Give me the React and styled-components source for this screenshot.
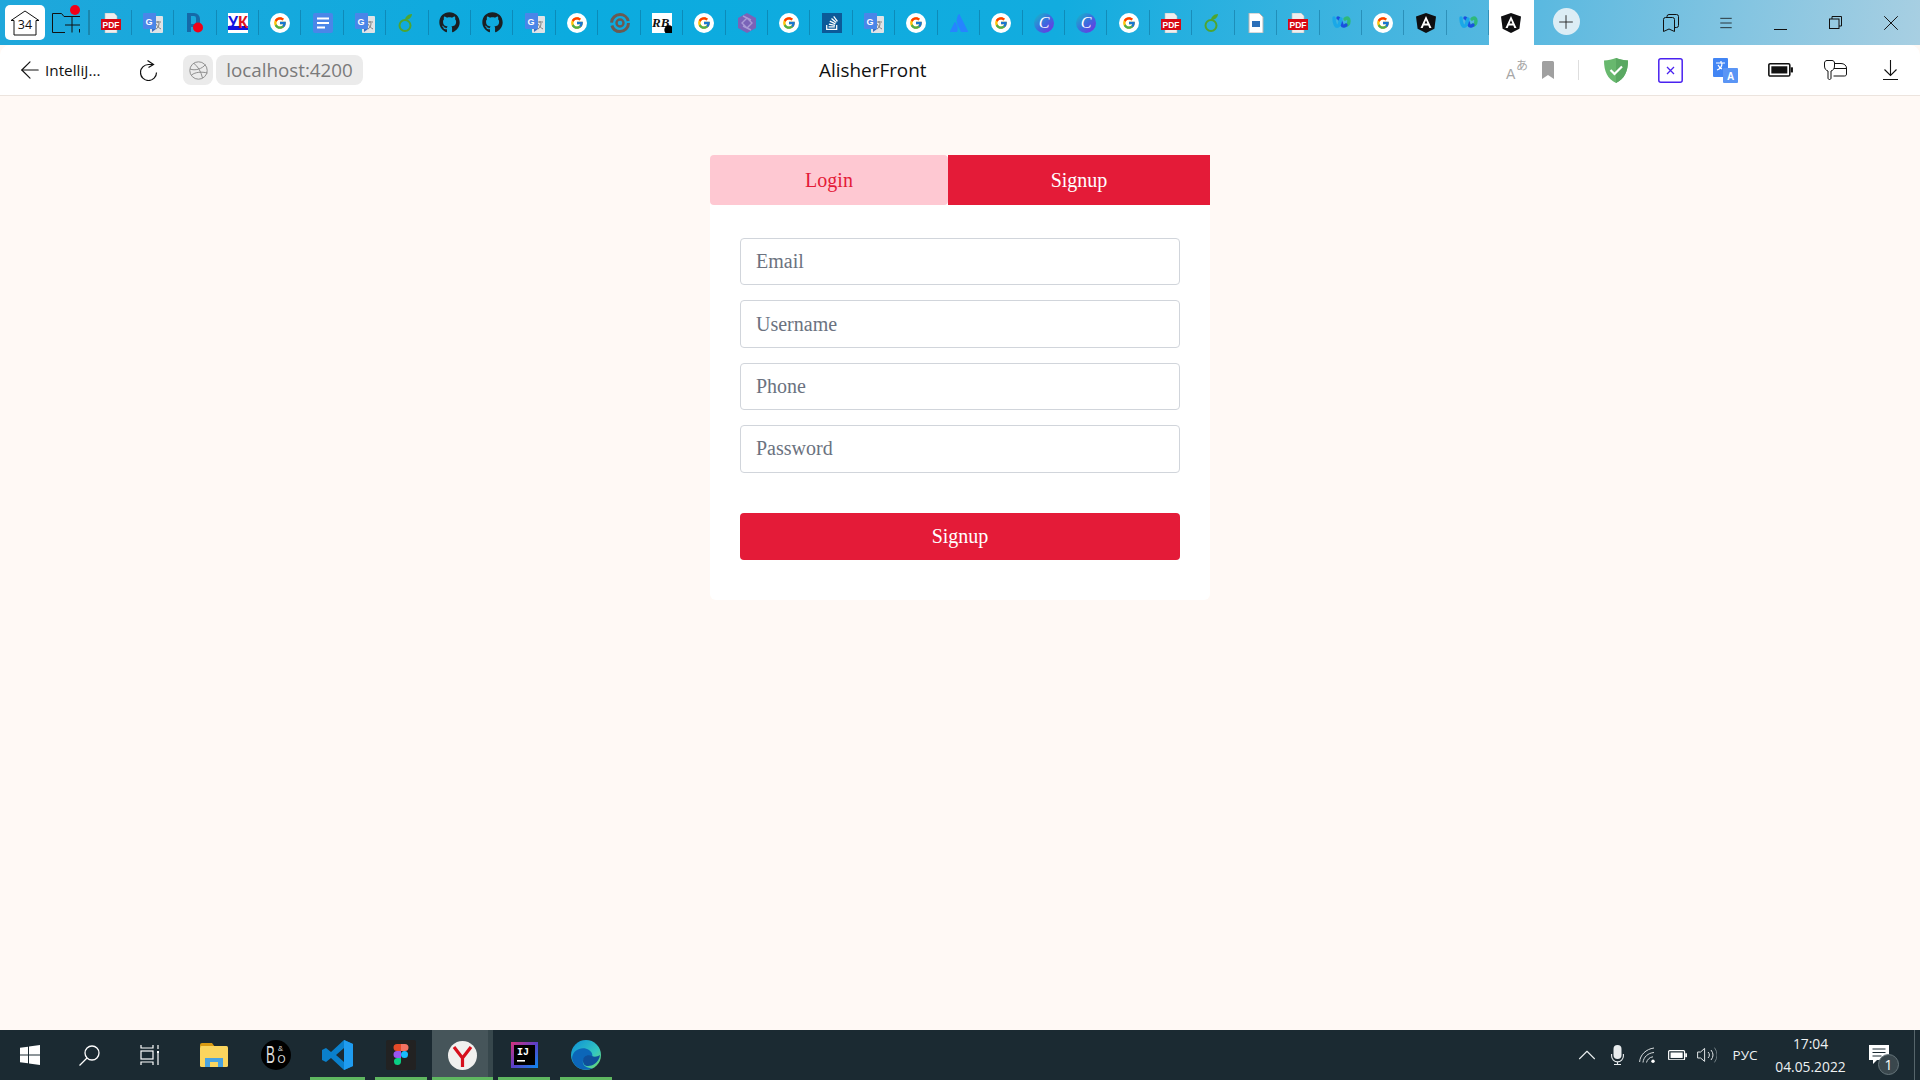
import React from 'react';
import styled, { createGlobalStyle } from 'styled-components';
import { ArrowLeft, X, Menu, Plus, ChevronUp } from 'lucide-react';
import { FcGoogle } from 'react-icons/fc';
import { FaGithub, FaStackOverflow } from 'react-icons/fa';
import { SiAtlassian } from 'react-icons/si';

const GlobalStyle = createGlobalStyle`
  html, body {
    margin: 0;
    height: 100%;
    overflow: hidden;
  }
  * { box-sizing: border-box; }
`;

const Screen = styled.div`
  width: 1920px;
  height: 1080px;
  display: flex;
  flex-direction: column;
  background: #fff9f5;
`;

const TabBar = styled.div`
  height: 45px;
  display: flex;
  align-items: stretch;
  background: linear-gradient(100deg, #1fa7db 0%, #0babdf 30%, #12acdf 55%, #5bb9e0 80%, #a8cfe2 100%);
`;

const HomeButton = styled.div`
  width: 40px;
  height: 35px;
  margin: 5px 0 0 5px;
  background: #fff;
  border-radius: 5px;
  display: flex;
  align-items: center;
  justify-content: center;
`;

const FolderButton = styled.div`
  position: relative;
  width: 41px;
  margin-right: 2px;
  display: flex;
  align-items: center;
  justify-content: center;
  svg { margin-top: 1px; }
`;

const RedDot = styled.span`
  position: absolute;
  top: 5px;
  right: 6px;
  width: 10px;
  height: 10px;
  border-radius: 50%;
  background: #f00018;
`;

const TabList = styled.div`
  display: flex;
  border-left: 2px solid #1a86ad;
  margin: 10px 0 10px 0;
`;

const Tab = styled.div`
  flex: 0 0 ${(p) => (p.$first ? '41.7px' : '42.43px')};
  margin: -10px 0;
  display: flex;
  align-items: center;
  justify-content: center;
  position: relative;
  &::after {
    content: '';
    position: absolute;
    right: 0;
    top: 10px;
    bottom: 10px;
    width: 1px;
    background: rgba(10, 100, 140, 0.45);
  }
`;

const ActiveTab = styled.div`
  width: 44.5px;
  background: #fff;
  display: flex;
  align-items: center;
  justify-content: center;
`;

const NewTab = styled.div`
  width: 27px;
  height: 27px;
  margin: 8px 0 0 19px;
  border-radius: 50%;
  background: #dcedf5;
  display: flex;
  align-items: center;
  justify-content: center;
  color: #222;
`;

const WindowControls = styled.div`
  margin-left: auto;
  display: flex;
  align-items: center;
  padding-right: 2px;
`;

const WindowButton = styled.div`
  width: 55px;
  height: 45px;
  display: flex;
  align-items: center;
  justify-content: center;
  color: #111;
`;

const Toolbar = styled.div`
  height: 51px;
  display: flex;
  align-items: center;
  background: #fff;
  border-radius: 10px 10px 0 0;
  border-bottom: 1px solid #ece4de;
  padding: 0 2px 0 16px;
  font-family: 'Open Sans', 'Noto Sans', sans-serif;
`;

const BackLabel = styled.span`
  margin-left: 1px;
  width: 95px;
  font-size: 15.3px;
  color: #111;
  white-space: nowrap;
`;

const Reload = styled.div`
  width: 18px;
  display: flex;
`;

const Chip = styled.div`
  height: 30px;
  background: #ebebeb;
  border-radius: 8px;
  display: flex;
  align-items: center;
  justify-content: center;
`;

const GlobeChip = styled(Chip)`
  width: 30px;
  margin-left: 25px;
`;

const AddressChip = styled(Chip)`
  width: 147px;
  margin-left: 3px;
  font-size: 18.8px;
  color: #7a7a7a;
  white-space: nowrap;
`;

const PageTitle = styled.div`
  margin-left: 456px;
  font-size: 18.9px;
  color: #111;
  white-space: nowrap;
`;

const ToolGroup = styled.div`
  margin-left: auto;
  display: flex;
  align-items: center;
`;

const ToolSlot = styled.div`
  width: ${(p) => p.$w || 55}px;
  display: flex;
  align-items: center;
  justify-content: center;
`;

const ToolDivider = styled.div`
  width: 1px;
  height: 20px;
  margin: 0 9px 0 15px;
  background: #dedede;
`;

const Main = styled.main`
  flex: 1;
  display: flex;
  justify-content: center;
  align-items: flex-start;
  padding-top: 59px;
  font-family: 'Liberation Serif', 'Times New Roman', serif;
`;

const AuthCard = styled.div`
  width: 500px;
  background: #fff;
  border-radius: 6px;
`;

const AuthTabs = styled.div`
  display: flex;
  height: 50px;
`;

const AuthTab = styled.button`
  flex: ${(p) => (p.$active ? '0 0 262px' : '0 0 238px')};
  border: 0;
  padding: 0;
  font: 20px 'Liberation Serif', 'Times New Roman', serif;
  border-radius: ${(p) => (p.$active ? '0' : '4px')};
  background: ${(p) => (p.$active ? '#e41b38' : '#fec8d2')};
  color: ${(p) => (p.$active ? '#fff' : '#e41b38')};
`;

const AuthForm = styled.form`
  display: flex;
  flex-direction: column;
  gap: 15px;
  padding: 33px 30px 40px;
`;

const Field = styled.input`
  height: 47.4px;
  width: 100%;
  border: 1px solid #d1d5db;
  border-radius: 4px;
  padding: 0 15px;
  font: 20px 'Liberation Serif', 'Times New Roman', serif;
  background: #fff;
  &::placeholder {
    color: #6b7280;
    opacity: 1;
  }
`;

const SubmitButton = styled.button`
  height: 47px;
  margin-top: 25.4px;
  border: 0;
  border-radius: 4px;
  background: #e41b38;
  color: #fff;
  font: 20px 'Liberation Serif', 'Times New Roman', serif;
`;

const Taskbar = styled.footer`
  height: 50px;
  display: flex;
  align-items: stretch;
  justify-content: space-between;
  background: #1b2a32;
  color: #fff;
  font-family: 'Open Sans', 'Noto Sans', sans-serif;
`;

const TaskGroup = styled.div`
  display: flex;
`;

const TaskItem = styled.div`
  position: relative;
  width: ${(p) => p.$w || 61.7}px;
  display: flex;
  align-items: center;
  justify-content: center;
  background: ${(p) => (p.$current ? '#46555a' : 'transparent')};
  ${(p) => p.$current && 'box-shadow: inset -5px 0 0 #37474c;'}
  ${(p) => p.$running && `
    &::after {
      content: '';
      position: absolute;
      left: ${p.$current ? '0' : '5px'};
      right: ${p.$current ? '0' : '5px'};
      bottom: 0;
      height: 3px;
      background: #5fb760;
    }
  `}
`;

const Tray = styled.div`
  display: flex;
  align-items: stretch;
`;

const TraySlot = styled.div`
  width: ${(p) => p.$w || 30}px;
  display: flex;
  align-items: center;
  justify-content: center;
`;

const TrayLang = styled(TraySlot)`
  font-size: 13.5px;
  color: #eef1f2;
`;

const Clock = styled(TraySlot)`
  flex-direction: column;
  gap: 3px;
  font-size: 13.8px;
  line-height: 20px;
  color: #eef1f2;
`;

const NoticeSlot = styled.div`
  position: relative;
  width: 61px;
  padding-left: 16px;
  display: flex;
  align-items: center;
`;

const Badge = styled.span`
  position: absolute;
  left: 25px;
  top: 24px;
  width: 21px;
  height: 21px;
  border-radius: 50%;
  background: #3a474d;
  border: 1px solid #66757b;
  color: #fff;
  font-size: 14px;
  line-height: 19px;
  text-align: center;
`;

const ShowDesktop = styled.div`
  width: 6px;
  border-left: 1px solid #56656b;
`;

/* tab favicons */
const GoogleIcon = () => (
  <svg width="20" height="20" viewBox="0 0 20 20">
    <circle cx="10" cy="10" r="10" fill="#fff" />
    <foreignObject x="3" y="3" width="14" height="14"><FcGoogle size={14} /></foreignObject>
  </svg>
);

const PdfIcon = () => (
  <svg width="20" height="20" viewBox="0 0 20 20">
    <path d="M4 0h9l3 3v17H4z" fill="#eee" stroke="#bbb" strokeWidth=".6" />
    <rect y="6" width="20" height="11" fill="#d60a14" />
    <text x="10" y="15" textAnchor="middle" fontSize="8.5" fontWeight="700" fontFamily="Liberation Sans" fill="#fff">PDF</text>
  </svg>
);

const TranslateIcon = () => (
  <svg width="20" height="20" viewBox="0 0 20 20">
    <rect x="7" y="3" width="13" height="17" rx="1" fill="#dfe3e6" />
    <path d="M12 9h6M15 8v2M13 16c2-1 3-3 3-6M13 11c1 2 3 4 5 5" stroke="#777" strokeWidth=".9" fill="none" />
    <path d="M1 0h12v16H1.5A1.5 1.5 0 0 1 0 14.5V1a1 1 0 0 1 1-1z" fill="#4a86e8" />
    <path d="M9 16l0 3 4-3z" fill="#3b6fc4" />
    <text x="6" y="11.5" textAnchor="middle" fontSize="9" fontWeight="700" fontFamily="Liberation Sans" fill="#fff">G</text>
  </svg>
);

const ParkingIcon = () => (
  <svg width="20" height="20" viewBox="0 0 20 20">
    <path d="M2 0h7a6 6 0 0 1 6 6v4a4 4 0 0 1-4 4H6v5H2zM6 3v8h3a2 2 0 0 0 2-2V5a2 2 0 0 0-2-2z" fill="#1569a8" />
    <circle cx="13" cy="14.5" r="5" fill="#f00018" />
  </svg>
);

const YkIcon = () => (
  <svg width="20" height="20" viewBox="0 0 20 20">
    <rect width="20" height="20" fill="#fff" />
    <rect y="13" width="20" height="4" fill="#1414e0" />
    <text x="0" y="15" fontSize="17" fontWeight="700" fontFamily="Liberation Sans" fill="#1414e0" textLength="10" lengthAdjust="spacingAndGlyphs">У</text>
    <text x="10" y="15" fontSize="17" fontWeight="700" fontFamily="Liberation Sans" fill="#e0141e" textLength="10" lengthAdjust="spacingAndGlyphs">К</text>
  </svg>
);

const DocsIcon = () => (
  <svg width="20" height="20" viewBox="0 0 20 20">
    <rect width="20" height="20" rx="2" fill="#4a86e8" />
    <path d="M4 5.5h12M4 10h12M4 14.5h8" stroke="#fff" strokeWidth="2" />
  </svg>
);

const OverleafIcon = () => (
  <svg width="20" height="20" viewBox="0 0 20 20" fill="none">
    <circle cx="8" cy="12.5" r="5.5" stroke="#4ea52f" strokeWidth="2" />
    <path d="M8 7c0-3 3-6 7-6 0 3-3 6-7 6z" fill="#4ea52f" />
  </svg>
);

const GithubIcon = () => <FaGithub size={21} color="#1b1f23" />;

const RingIcon = () => (
  <svg width="20" height="20" viewBox="0 0 20 20" fill="none" stroke="#6a5a52">
    <circle cx="10" cy="10" r="8.5" strokeWidth="3" strokeDasharray="24 3" />
    <circle cx="10" cy="10" r="3.5" strokeWidth="2.4" />
  </svg>
);

const RbIcon = () => (
  <svg width="20" height="20" viewBox="0 0 20 20">
    <rect width="20" height="20" fill="#fff" />
    <text x="0" y="14" fontSize="13" fontWeight="700" fontStyle="italic" fontFamily="Liberation Serif" fill="#111">RB</text>
    <circle cx="17" cy="17" r="4.7" fill="#000" />
  </svg>
);

const HexIcon = () => (
  <svg width="20" height="20" viewBox="0 0 20 20">
    <path d="M10 0l9 5v10l-9 5-9-5V5z" fill="#7a63b8" />
    <path d="M10 5l5 5-5 5-5-5zM6 3l8 4M14 17l-8-4" stroke="#a99ad6" strokeWidth="1.4" fill="none" />
  </svg>
);

const StackIcon = () => (
  <svg width="20" height="20" viewBox="0 0 20 20">
    <rect width="20" height="20" fill="#0c5a98" />
    <foreignObject x="2" y="2" width="16" height="16"><FaStackOverflow size={16} color="#fff" /></foreignObject>
  </svg>
);

const AtlassianIcon = () => <SiAtlassian size={18} color="#2684ff" />;

const CanvaIcon = () => (
  <svg width="20" height="20" viewBox="0 0 20 20">
    <defs>
      <linearGradient id="canvaFill" x1="0" y1="0" x2="1" y2="1">
        <stop offset="0" stopColor="#10c0c8" />
        <stop offset=".55" stopColor="#3f66e0" />
        <stop offset="1" stopColor="#7a2be0" />
      </linearGradient>
    </defs>
    <circle cx="10" cy="10" r="10" fill="url(#canvaFill)" />
    <text x="10" y="15" textAnchor="middle" fontSize="16" fontStyle="italic" fontFamily="Liberation Serif" fill="#fff">C</text>
  </svg>
);

const FileIcon = () => (
  <svg width="20" height="20" viewBox="0 0 20 20">
    <path d="M3 0h10l4 4v16H3z" fill="#fff" stroke="#b4b4b4" />
    <rect x="6" y="8" width="8" height="6" fill="#2c6fb8" />
  </svg>
);

const WebflowIcon = () => (
  <svg width="20" height="20" viewBox="0 0 20 20" fill="none" strokeWidth="3.4" strokeLinecap="round">
    <path d="M14 6c2-2 4-1 4 2s-2 5-3 4" stroke="#2fb87a" />
    <path d="M7 5c2 0 3 4 4 7 1 2 3 1 4 0" stroke="#1a4fe0" />
    <path d="M3 5c0 6 2 9 4 8s2-5 3-7" stroke="#1aa8e8" />
  </svg>
);

const AngularIcon = () => (
  <svg width="20" height="20" viewBox="0 0 20 20">
    <path d="M10 0l10 3.4-1.6 12.4L10 20l-8.4-4.2L0 3.4z" fill="#0e0e10" />
    <path d="M10 3L4.5 15h2.2l1-2.6h4.6l1 2.6h2.2zM8.6 10.6L10 7.2l1.4 3.4z" fill="#fff" />
  </svg>
);

const tabIcons = [
  PdfIcon, TranslateIcon, ParkingIcon, YkIcon, GoogleIcon, DocsIcon, TranslateIcon, OverleafIcon,
  GithubIcon, GithubIcon, TranslateIcon, GoogleIcon, RingIcon, RbIcon, GoogleIcon, HexIcon,
  GoogleIcon, StackIcon, TranslateIcon, GoogleIcon, AtlassianIcon, GoogleIcon, CanvaIcon, CanvaIcon,
  GoogleIcon, PdfIcon, OverleafIcon, FileIcon, PdfIcon, WebflowIcon, GoogleIcon, AngularIcon, WebflowIcon,
];

/* taskbar icons */
const WindowsLogo = () => (
  <svg width="20" height="20" viewBox="0 0 20 20" fill="#fff">
    <path d="M0 2.8l8-1.1v7.8H0zM9 1.5L20 0v9.5H9zM0 10.5h8v7.8l-8-1.1zM9 10.5h11V20L9 18.5z" />
  </svg>
);

const SearchGlyph = () => (
  <svg width="21" height="21" viewBox="0 0 21 21" fill="none" stroke="#fff" strokeWidth="1.3">
    <circle cx="13" cy="8" r="7" />
    <path d="M8 13l-7.5 7.5" />
  </svg>
);

const TaskViewGlyph = () => (
  <svg width="19" height="20" viewBox="0 0 19 20" fill="none" stroke="#fff" strokeWidth="1.2">
    <path d="M1 0v3h12V0M1 20v-3h12v3M18 0v4M18 8v12" />
    <rect x="1" y="6" width="12" height="8" />
    <path d="M18 6v2" strokeWidth="2" />
  </svg>
);

const ExplorerGlyph = () => (
  <svg width="28" height="24" viewBox="0 0 28 24">
    <path d="M0 2a2 2 0 0 1 2-2h10l3 4H0z" fill="#d99a12" />
    <rect y="3" width="28" height="21" rx="1.5" fill="#fbd55e" />
    <path d="M5 24v-9h18v9h-5v-5h-8v5z" fill="#4aa3e0" />
  </svg>
);

const BangGlyph = () => (
  <svg width="30" height="30" viewBox="0 0 30 30">
    <circle cx="15" cy="15" r="15" fill="#000" />
    <text x="5" y="23" fontSize="23" fontFamily="Liberation Sans" fill="#ddd" textLength="9" lengthAdjust="spacingAndGlyphs">B</text>
    <text x="17" y="10.5" fontSize="7.5" fontFamily="Liberation Sans" fill="#ddd">&amp;</text>
    <text x="16.5" y="23" fontSize="11" fontFamily="Liberation Sans" fill="#ddd" textLength="8" lengthAdjust="spacingAndGlyphs">O</text>
  </svg>
);

const VscodeGlyph = () => (
  <svg width="31" height="30" viewBox="0 0 31 30">
    <path d="M22 0l9 4v22l-9 4-13-12-5 4-4-2V10l4-2 5 4zM22 8l-8 7 8 7z" fill="#0a80cc" />
    <path d="M22 0l9 4v22l-9 4z" fill="#1f9cf0" />
  </svg>
);

const FigmaGlyph = () => (
  <svg width="30" height="30" viewBox="0 0 30 30">
    <rect width="30" height="30" rx="2" fill="#222" />
    <path d="M15 4h-4a3.5 3.5 0 0 0 0 7h4z" fill="#e64a28" />
    <path d="M15 4h4a3.5 3.5 0 0 1 0 7h-4z" fill="#f47262" />
    <path d="M15 11h-4a3.5 3.5 0 0 0 0 7h4z" fill="#9a55f0" />
    <circle cx="18.5" cy="14.5" r="3.5" fill="#19bcfe" />
    <path d="M11 18h4v3.5a3.5 3.5 0 1 1-4-3.5z" fill="#0acf83" />
  </svg>
);

const YandexGlyph = () => (
  <svg width="29" height="29" viewBox="0 0 29 29">
    <circle cx="14.5" cy="14.5" r="14.5" fill="#f0f0ee" />
    <path d="M6 6l8.5 11v9M23 6l-8.5 11" stroke="#d6101c" strokeWidth="3.2" fill="none" />
  </svg>
);

const IdeaGlyph = () => (
  <svg width="27" height="26" viewBox="0 0 27 26">
    <defs>
      <linearGradient id="ideaEdge" x1="0" y1="0" x2="1" y2="1">
        <stop offset="0" stopColor="#d8317a" />
        <stop offset=".5" stopColor="#5a3fc8" />
        <stop offset="1" stopColor="#0a8af0" />
      </linearGradient>
    </defs>
    <rect width="27" height="26" fill="url(#ideaEdge)" />
    <rect x="3" y="3" width="21" height="20" fill="#000" />
    <text x="6" y="13" fontSize="10" fontWeight="700" fontFamily="Liberation Mono" fill="#fff">IJ</text>
    <rect x="6" y="18" width="8" height="1.6" fill="#fff" />
  </svg>
);

const EdgeGlyph = () => (
  <svg width="30" height="30" viewBox="0 0 30 30">
    <defs>
      <linearGradient id="edgeTop" x1="0" y1="0" x2="1" y2="1">
        <stop offset="0" stopColor="#0c8ed8" />
        <stop offset=".6" stopColor="#33c6c0" />
        <stop offset="1" stopColor="#7cdc60" />
      </linearGradient>
    </defs>
    <circle cx="15" cy="15" r="15" fill="url(#edgeTop)" />
    <path d="M1 18C2 9 12 6 18 10c3 2 4 5 3 7-5 2-10 0-9 6 0 2 4 6 10 5-10 5-20-1-21-10z" fill="#0c66b8" />
    <path d="M12 21c0-5 5-7 9-5 2 1 5 1 8-1-1 8-8 11-12 11-3 0-5-2-5-5z" fill="#0f4f9a" />
  </svg>
);

const MicGlyph = () => (
  <svg width="13" height="20" viewBox="0 0 13 20" fill="none" stroke="#e8ecee" strokeWidth="1.1">
    <rect x="2.5" y="0" width="8" height="14" rx="4" fill="#e8ecee" stroke="none" />
    <path d="M.6 9v2a5.9 5.9 0 0 0 11.8 0V9M6.5 17v2.5M3 19.5h7" />
  </svg>
);

const WifiGlyph = () => (
  <svg width="16" height="16" viewBox="0 0 16 16" fill="none" stroke="#d7dcde" strokeWidth="1">
    <path d="M.6 15C1 8 7 2 15 1M4 15.5C4.5 10 9 6 15 5.5M7.5 15.5C8 13 10.5 10 14 9.8" />
    <circle cx="14" cy="14.3" r="1.7" fill="#fff" stroke="none" />
  </svg>
);

const BatteryGlyph = ({ stroke = '#fff', size = 19 }) => (
  <svg width={size} height={size * 0.55} viewBox="0 0 19 10.5">
    <rect x=".6" y=".6" width="16" height="9.3" rx="1" fill="none" stroke={stroke} strokeWidth="1.2" />
    <rect x="2.5" y="2.5" width="12.2" height="5.5" fill={stroke} />
    <rect x="17.3" y="3.3" width="1.7" height="3.9" fill={stroke} />
  </svg>
);

const SpeakerGlyph = () => (
  <svg width="20" height="16" viewBox="0 0 20 16" fill="none" stroke="#dfe3e5" strokeWidth="1">
    <path d="M.6 5h3l4-3.6v13L3.6 11h-3z" />
    <path d="M11 5a4 4 0 0 1 0 6M14 3a8 8 0 0 1 0 10" />
    <path d="M17.5 .6a13 13 0 0 1 0 14.8" stroke="#6f7c82" />
  </svg>
);

const MessageGlyph = () => (
  <svg width="20" height="20" viewBox="0 0 20 20">
    <path d="M0 0h20v15H8l-4 4v-4H0z" fill="#fff" />
    <path d="M3.5 4h13M3.5 7.5h13M3.5 11h9" stroke="#1b2a32" strokeWidth="1" />
  </svg>
);

/* toolbar icons */
const HouseCount = () => (
  <svg width="30" height="26" viewBox="0 0 30 26" fill="none" stroke="#111" strokeWidth="1">
    <path d="M1 10.5L15 1l14 9.5M1 10.5h3v14.5h22V10.5h3" />
    <text x="15" y="19" textAnchor="middle" fontSize="12.5" stroke="none" fill="#111" fontFamily="Open Sans">34</text>
  </svg>
);

const FolderPlus = () => (
  <svg width="28" height="20" viewBox="0 0 28 20" fill="none" stroke="#111" strokeWidth="1">
    <path d="M13 19.5H.5V.5h9l2.5 3h16M27.5 19.5V16M20 4v15.5M13 12h15" />
  </svg>
);

const ReloadIcon = () => (
  <svg width="18" height="21" viewBox="0 0 18 21" fill="none" stroke="#111" strokeWidth="1.2">
    <path d="M13 4.5H8.5a8 8 0 1 0 8 8" />
    <path d="M7.5 .5l6 4-5 3" />
  </svg>
);

const GlobeIcon = () => (
  <svg width="19" height="19" viewBox="0 0 19 19" fill="none" stroke="#8f8f8f" strokeWidth="1">
    <circle cx="9.5" cy="9.5" r="8.7" />
    <path d="M5 2.5c4 3 7 8 8.5 14.5M1 8c5 2 12 0 15.5-4.5M2.5 14c4-3 10-3.5 16-2" />
  </svg>
);

const ReadingIcon = () => (
  <svg width="28" height="32" viewBox="0 -4 28 32">
    <text x="2" y="21" fontSize="14" fontFamily="Liberation Sans" fill="#a6a6a6">A</text>
    <text x="12" y="12" fontSize="12" fontFamily="Noto Sans CJK JP" fill="#a6a6a6">あ</text>
  </svg>
);

const BookmarkIcon = () => (
  <svg width="12" height="18" viewBox="0 0 12 18">
    <path d="M0 1.5A1.5 1.5 0 0 1 1.5 0h9A1.5 1.5 0 0 1 12 1.5V18l-6-4-6 4z" fill="#a0a0a0" />
  </svg>
);

const ShieldIcon = () => (
  <svg width="24" height="25" viewBox="0 0 24 25">
    <path d="M12 0C8 1.5 4 2.5 0 2.5 0 13 3.5 21 12 25c8.5-4 12-12 12-22.5C20 2.5 16 1.5 12 0z" fill="#68b86e" />
    <path d="M12 0c4 1.5 8 2.5 12 2.5C24 13 20.5 21 12 25z" fill="#5aa862" />
    <path d="M6.5 12l4 4 7.5-7.5" stroke="#fff" strokeWidth="2.2" fill="none" />
  </svg>
);

const CloseBoxIcon = () => (
  <svg width="25" height="25" viewBox="0 0 25 25" fill="none" stroke="#4a22f0">
    <rect x=".8" y=".8" width="23.4" height="23.4" rx="2" strokeWidth="1.5" />
    <path d="M9 9l7 7M16 9l-7 7" strokeWidth="1.3" />
  </svg>
);

const TranslatorIcon = () => (
  <svg width="25" height="25" viewBox="0 0 25 25">
    <rect width="15" height="19" rx="1" fill="#4285f4" />
    <rect x="10" y="10" width="15" height="15" rx="1" fill="#5a95f5" />
    <path d="M3 5h9M8 3v2M4 12c3-1 5-4 5-7M5 7c1 2 2 3 4 4" stroke="#fff" strokeWidth="1.2" fill="none" />
    <text x="17.5" y="22" textAnchor="middle" fontSize="10" fontWeight="700" fontFamily="Liberation Sans" fill="#fff">A</text>
  </svg>
);

const KeyFolderIcon = () => (
  <svg width="23" height="20" viewBox="0 0 23 20" fill="none" stroke="#111" strokeWidth="1">
    <path d="M5.5 19.5c-1 0-1.5-.7-1.5-1.5v-7c-2-.7-3.5-2-3.5-5V3c0-1.4 1-2.5 2.5-2.5h5C9.5.5 10.5 1.5 10.5 3v3c0 3-1.5 4.3-3.5 5v7c0 .8-.5 1.5-1.5 1.5z" />
    <path d="M11 3.5h6c3 0 5.5 2 5.5 4.5v6c0 1.5-1 2-2 2H9.5M10 8.5h12.5" />
  </svg>
);

const DownloadIcon = () => (
  <svg width="15" height="20" viewBox="0 0 15 20" fill="none" stroke="#111" strokeWidth="1.1">
    <path d="M7.5 0v15.5M1.5 9.5l6 6 6-6M0 19.5h15" />
  </svg>
);

const MinimizeIcon = () => (
  <svg width="13" height="14" viewBox="0 0 13 14"><path d="M0 13.5h13" stroke="#111" strokeWidth="1" /></svg>
);

const RestoreIcon = () => (
  <svg width="13" height="13" viewBox="0 0 13 13" fill="none" stroke="#111" strokeWidth="1">
    <rect x=".5" y="3" width="9.5" height="9.5" />
    <path d="M3 3V.5h9.5V10H10" />
  </svg>
);

const BookmarksIcon = () => (
  <svg width="16" height="18" viewBox="0 0 16 18" fill="none" stroke="#111" strokeWidth="1">
    <path d="M.5 5.5a2 2 0 0 1 2-2h7a2 2 0 0 1 2 2v12l-5.5-2.5L.5 17.5z" />
    <path d="M4 3.5V2.5a2 2 0 0 1 2-2h7.5a2 2 0 0 1 2 2v9a2 2 0 0 1-2 2h-2" />
  </svg>
);

const App = () => (
  <Screen>
    <GlobalStyle />
    <TabBar>
      <HomeButton><HouseCount /></HomeButton>
      <FolderButton>
        <FolderPlus />
        <RedDot />
      </FolderButton>
      <TabList>
        {tabIcons.map((Icon, i) => (
          <Tab key={i} $first={i === 0}><Icon /></Tab>
        ))}
      </TabList>
      <ActiveTab><AngularIcon /></ActiveTab>
      <NewTab><Plus size={22} strokeWidth={1} /></NewTab>
      <WindowControls>
        <WindowButton><BookmarksIcon /></WindowButton>
        <WindowButton><Menu size={16} strokeWidth={1.2} /></WindowButton>
        <WindowButton><MinimizeIcon /></WindowButton>
        <WindowButton><RestoreIcon /></WindowButton>
        <WindowButton><X size={26} strokeWidth={0.9} /></WindowButton>
      </WindowControls>
    </TabBar>

    <Toolbar>
      <ArrowLeft size={28} strokeWidth={1} color="#111" />
      <BackLabel>IntelliJ...</BackLabel>
      <Reload><ReloadIcon /></Reload>
      <GlobeChip><GlobeIcon /></GlobeChip>
      <AddressChip>localhost:4200</AddressChip>
      <PageTitle>AlisherFront</PageTitle>
      <ToolGroup>
        <ToolSlot $w={30}><ReadingIcon /></ToolSlot>
        <ToolSlot $w={30}><BookmarkIcon /></ToolSlot>
        <ToolDivider />
        <ToolSlot><ShieldIcon /></ToolSlot>
        <ToolSlot><CloseBoxIcon /></ToolSlot>
        <ToolSlot><TranslatorIcon /></ToolSlot>
        <ToolSlot><BatteryGlyph stroke="#111" size={25} /></ToolSlot>
        <ToolSlot><KeyFolderIcon /></ToolSlot>
        <ToolSlot><DownloadIcon /></ToolSlot>
      </ToolGroup>
    </Toolbar>

    <Main>
      <AuthCard>
        <AuthTabs>
          <AuthTab type="button">Login</AuthTab>
          <AuthTab type="button" $active>Signup</AuthTab>
        </AuthTabs>
        <AuthForm onSubmit={(e) => e.preventDefault()}>
          <Field placeholder="Email" />
          <Field placeholder="Username" />
          <Field placeholder="Phone" />
          <Field placeholder="Password" type="password" />
          <SubmitButton type="submit">Signup</SubmitButton>
        </AuthForm>
      </AuthCard>
    </Main>

    <Taskbar>
      <TaskGroup>
        <TaskItem $w={60}><WindowsLogo /></TaskItem>
        <TaskItem $w={58}><SearchGlyph /></TaskItem>
        <TaskItem $w={63}><TaskViewGlyph /></TaskItem>
        <TaskItem $w={66}><ExplorerGlyph /></TaskItem>
        <TaskItem $w={58}><BangGlyph /></TaskItem>
        <TaskItem $w={65} $running><VscodeGlyph /></TaskItem>
        <TaskItem $running><FigmaGlyph /></TaskItem>
        <TaskItem $running $current><YandexGlyph /></TaskItem>
        <TaskItem $running><IdeaGlyph /></TaskItem>
        <TaskItem $running><EdgeGlyph /></TaskItem>
      </TaskGroup>
      <Tray>
        <TraySlot><ChevronUp size={30} strokeWidth={0.9} color="#e8ecee" /></TraySlot>
        <TraySlot><MicGlyph /></TraySlot>
        <TraySlot><WifiGlyph /></TraySlot>
        <TraySlot><BatteryGlyph /></TraySlot>
        <TraySlot><SpeakerGlyph /></TraySlot>
        <TrayLang $w={46}>РУС</TrayLang>
        <Clock $w={85}>
          <span>17:04</span>
          <span>04.05.2022</span>
        </Clock>
        <NoticeSlot>
          <MessageGlyph />
          <Badge>1</Badge>
        </NoticeSlot>
        <ShowDesktop />
      </Tray>
    </Taskbar>
  </Screen>
);

export default App;
